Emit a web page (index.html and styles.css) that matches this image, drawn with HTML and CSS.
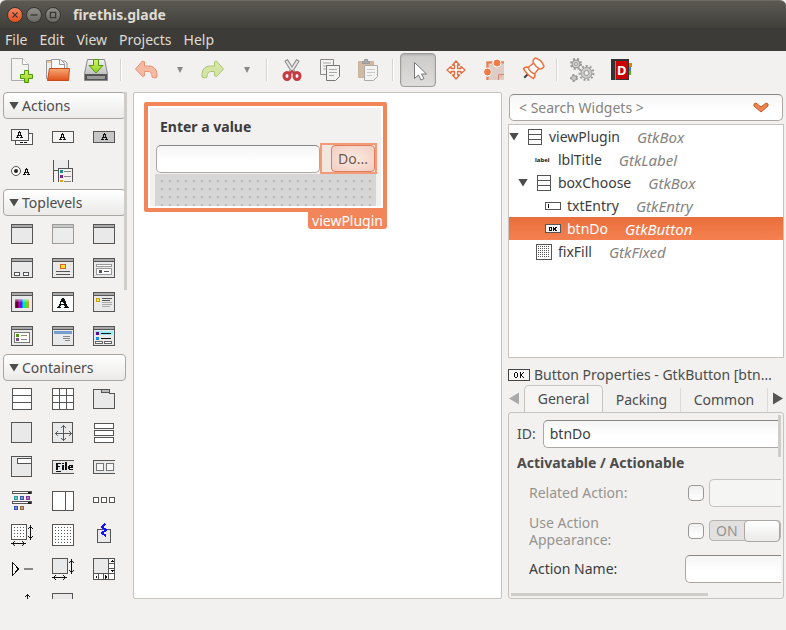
FILE: index.html
```html
<!DOCTYPE html>
<html lang="en">
<head>
<meta charset="utf-8">
<title>firethis.glade</title>
<link rel="stylesheet" href="styles.css">
</head>
<body>
<svg class="defs" aria-hidden="true">
  <defs>
    <linearGradient id="green" x1="0" y1="0" x2="0" y2="1"><stop offset="0" stop-color="#d6f06a"/><stop offset="1" stop-color="#8ccf20"/></linearGradient>
    <linearGradient id="folder" x1="0" y1="0" x2="0" y2="1"><stop offset="0" stop-color="#f6ab74"/><stop offset="1" stop-color="#e2501a"/></linearGradient>
    <linearGradient id="drive" x1="0" y1="0" x2="0" y2="1"><stop offset="0" stop-color="#f4f4f4"/><stop offset="1" stop-color="#a9a9a9"/></linearGradient>
    <linearGradient id="rainbow"><stop offset="0" stop-color="#f00"/><stop offset=".15" stop-color="#203"/><stop offset=".3" stop-color="#d0a"/><stop offset=".45" stop-color="#22f"/><stop offset=".6" stop-color="#0de"/><stop offset=".8" stop-color="#3e2"/><stop offset="1" stop-color="#f83"/></linearGradient>
    <linearGradient id="fade" x1="0" y1="0" x2="0" y2="1"><stop offset="0" stop-color="#fff" stop-opacity=".6"/><stop offset=".4" stop-color="#fff" stop-opacity="0"/></linearGradient>
    <pattern id="dots" width="3" height="3" patternUnits="userSpaceOnUse"><rect width="1" height="1" fill="#555"/></pattern>
    <pattern id="fine" width="2" height="2" patternUnits="userSpaceOnUse"><rect width="1" height="1" fill="#555"/></pattern>
    <g id="win"><rect x=".5" y="1.5" width="21" height="19" rx="1" fill="#e9e9e9" stroke="#555"/><path d="M1 2h20v2H1z" fill="#aaa"/><path d="M1 4.5h20" stroke="#555"/></g>
    <g id="letter"><path d="M4 0h1v1h1v3h1v2h1v1H5V6h1V5H3v1h1v1H1V6h1V4h1V1h1zM4 2v2h1V2z" fill="#111" fill-rule="evenodd"/></g>
    <g id="rows"><rect x=".5" y=".5" width="13" height="15" rx="1" fill="#fff" stroke="#555"/><path d="M1 5.500h12M1 10.500h12" stroke="#555"/></g>
    <g id="harrow" fill="none" stroke="#111"><path d="M0 3.500h15"/><path d="M3 1.500h1M2 2.500h1M2 4.500h1M3 5.500h1M11 1.500h1M12 2.500h1M12 4.500h1M11 5.500h1"/></g>
  </defs>
</svg>

<header class="titlebar">
  <button class="win-btn close" aria-label="Close"><svg viewBox="0 0 16 16"><path d="M5 5l6 6M11 5l-6 6"/></svg></button>
  <button class="win-btn" aria-label="Minimize"><svg viewBox="0 0 16 16"><path d="M4 8h8"/></svg></button>
  <button class="win-btn" aria-label="Maximize"><svg viewBox="0 0 16 16"><path d="M5 5h6v6H5z"/></svg></button>
  <h1>firethis.glade</h1>
</header>
<nav class="menubar">
  <button>File</button><button>Edit</button><button>View</button><button>Projects</button><button>Help</button>
</nav>

<div class="toolbar" role="toolbar">
  <button aria-label="New"><svg viewBox="0 0 26 26"><path d="M4.500 1.500h11l6 6v16h-17z" fill="#f4f4f3" stroke="#aaa"/><path d="M15.500 1.500v6h6" fill="#fff" stroke="#aaa"/><path d="M17.500 14.500h4v4h4v4h-4v4h-4v-4h-4v-4h4z" transform="translate(0 -1)" fill="url(#green)" stroke="#4e9a06"/></svg></button>
  <button aria-label="Open"><svg viewBox="0 0 26 26"><path d="M1.500 3.500h6v18h-6z" fill="#eee" stroke="#999"/><path d="M2 5h5" stroke="#f0a030"/><path d="M6.500 2.500h9l4 4v10h-13z" fill="#fafafa" stroke="#999"/><path d="M14.500 2.500v5h5M17 4h3l2 2v6" fill="none" stroke="#999"/><path d="M4.500 11.500h20l-1 12H2.500z" fill="url(#folder)" stroke="#c84a1a"/></svg></button>
  <button aria-label="Save"><svg viewBox="0 0 26 26"><path d="M4.500 2.500h17l3 14v7h-23v-7z" fill="url(#drive)" stroke="#888"/><path d="M2 17h22v6H2z" fill="#555"/><path d="M4 19h18v3H4z" fill="#999"/><path d="M10.500 2.500h5v6h4.500l-7 7.500-7-7.500h4.500z" fill="url(#green)" stroke="#4e9a06"/></svg></button>
  <span class="sep"></span>
  <button aria-label="Undo" disabled><svg class="dim" viewBox="0 0 26 26"><path d="M2.500 12l7-8q3 0 2 3v2h4c6 0 9 4 8.500 11q-2.500 2-5 0c0-4-2-5.500-4-5.500h-3.500v2q1 3-2 3z" stroke-linejoin="round" fill="#f6a582" stroke="#e4683a"/></svg></button>
  <button class="drop" aria-label="Undo history"><svg viewBox="0 0 8 6"><path d="M1 0h6L4 6z" fill="#888"/></svg></button>
  <button aria-label="Redo" disabled><svg class="dim" viewBox="0 0 26 26"><path d="M23.500 12l-7-8q-3 0-2 3v2h-4c-6 0-9 4-8.500 11q2.500 2 5 0c0-4 2-5.500 4-5.500h3.500v2q-1 3 2 3z" stroke-linejoin="round" fill="#c9e088" stroke="#86b440"/></svg></button>
  <button class="drop" aria-label="Redo history"><svg viewBox="0 0 8 6"><path d="M1 0h6L4 6z" fill="#888"/></svg></button>
  <span class="sep"></span>
  <button aria-label="Cut"><svg viewBox="0 0 26 26"><path d="M7 3l8 13M19 3l-8 13" stroke="#888" stroke-width="4"/><path d="M7.500 4l7 11M18.500 4l-7 11" stroke="#e6e6e6" stroke-width="2"/><g fill="none" stroke="#c63a40" stroke-width="3"><ellipse cx="8" cy="19" rx="3" ry="3.500"/><ellipse cx="18" cy="19" rx="3" ry="3.500"/></g><path d="M10 17l3-3 3 3" fill="none" stroke="#c63a40" stroke-width="2"/></svg></button>
  <button aria-label="Copy"><svg viewBox="0 0 26 26"><path d="M3.500 2.500h13v15h-13z" fill="#f3f3f2" stroke="#888"/><path d="M6 6h8M6 9h8M6 12h5" stroke="#aaa"/><path d="M9.500 8.500h13v11l-4 4h-9z" fill="#f3f3f2" stroke="#777"/><path d="M12 12.500h8M12 15.500h8M12 18.500h5" stroke="#aaa"/></svg></button>
  <button aria-label="Paste" disabled><svg viewBox="0 0 26 26"><path d="M3.500 4.500h15v16h-15z" fill="#d2baa0" stroke="#c9b59f"/><path d="M7.500 6.500h7v-2h-2v-2h-3v2h-2z" fill="#aaa" stroke="#999"/><path d="M9.500 8.500h13v11l-4 4h-9z" fill="#f3f3f2" stroke="#aaa"/><path d="M12 12.500h8M12 15.500h8M12 18.500h5" stroke="#ccc"/></svg></button>
  <span class="sep"></span>
  <button class="active" aria-label="Select" aria-pressed="true"><svg viewBox="0 0 26 26"><path d="M9.500 5.500v16l4-3.500 2.500 5 3-1.500-2.500-4.500h5z" fill="#fff" stroke="#777"/></svg></button>
  <button aria-label="Drag resize"><svg viewBox="0 0 26 26"><path d="M13 4l3.500 4H14.500v3.500H18v-2l4 3.500-4 3.500v-2h-3.500V18h2L13 22l-3.500-4h2v-3.500H8v2L4 13l4-3.500v2h3.500V8h-2z" fill="#fff" stroke="#e26a3c" stroke-width="1.300" stroke-linejoin="round"/></svg></button>
  <button aria-label="Margin edit"><svg viewBox="0 0 26 26"><path d="M5 4h18v19H5z" fill="#dfccc6"/><path d="M6.500 23v-3M6.500 11V5.500H11M20 5.500h3" fill="none" stroke="#ee7a4a" stroke-width="2"/><path d="M17.500 23v-5.500H23" fill="#e8b9a4" stroke="#c98d78"/><g fill="#f27a45" stroke="#fff"><circle cx="16" cy="6" r="4"/><circle cx="6.500" cy="15" r="4"/></g></svg></button>
  <button aria-label="Align edit"><svg viewBox="0 0 26 26"><g transform="rotate(45 13 13)" stroke-linejoin="round"><path d="M13 18v6" stroke="#444" stroke-width="2"/><g fill="#fff" stroke="#ee7140" stroke-width="1.500"><path d="M6 18c0-4 3-5 7-5s7 1 7 5q-7 2-14 0z"/><path d="M9.500 5h7l1 9q-4.500 2-9 0z"/><path d="M7 2q6-3 12 0 1 4-2 5-4 1-8 0-3-1-2-5z"/></g></g></svg></button>
  <span class="sep"></span>
  <button aria-label="Preview"><svg viewBox="0 0 26 26"><g fill="#ccc" stroke="#999"><circle cx="7" cy="7" r="4"/><circle cx="17.500" cy="16" r="5.500"/><circle cx="5" cy="21" r="2.500"/></g><g fill="none" stroke="#999" stroke-dasharray="2 2" stroke-width="2"><circle cx="7" cy="7" r="5"/><circle cx="17.500" cy="16" r="7"/><circle cx="5" cy="21" r="3"/></g><g fill="#eee" stroke="#999"><circle cx="7" cy="7" r="1.500"/><circle cx="17.500" cy="16" r="2.500"/></g></svg></button>
  <button aria-label="API documentation"><svg viewBox="0 0 26 26"><path d="M21 6h4v4h-4z" fill="#d98400"/><path d="M21 10h3v4h-3z" fill="#3a7fe0"/><path d="M21 14h3v4h-3z" fill="#58b030"/><path d="M4 2h18v21H4z" fill="#333"/><path d="M8 4h13v18H8z" fill="#cc0000"/><path d="M8.500 4v19" stroke="#888"/><text class="book-letter" x="10" y="18">D</text></svg></button>
</div>

<main>
  <aside class="palette">
    <section>
      <button class="group-head"><span class="tri"></span>Actions</button>
      <div class="grid">
        <button aria-label="Action group"><svg viewBox="0 0 22 22"><rect x="4.500" y="7.500" width="17" height="11" rx="1" fill="#f8f8f8" stroke="#555"/><path d="M9 16.500h8" stroke="#111" stroke-dasharray="3 1"/><rect x=".5" y="3.500" width="17" height="11" rx="1" fill="#f4f4f4" stroke="#555"/><use href="#letter" x="4" y="5"/></svg></button>
        <button aria-label="Action"><svg viewBox="0 0 22 22"><rect x=".5" y="5.500" width="21" height="11" rx="1" fill="#f4f4f4" stroke="#555"/><use href="#letter" x="6" y="7"/></svg></button>
        <button aria-label="Toggle action"><svg viewBox="0 0 22 22"><rect x=".5" y="5.500" width="21" height="11" rx="1" fill="#c6c6c6" stroke="#555"/><use href="#letter" x="7" y="7"/></svg></button>
        <button aria-label="Radio action"><svg viewBox="0 0 22 22"><g shape-rendering="auto"><circle cx="5" cy="11" r="4.500" fill="#fff" stroke="#555"/><circle cx="5" cy="11" r="2" fill="#222"/></g><use href="#letter" x="11" y="8"/></svg></button>
        <button aria-label="Recent action"><svg viewBox="0 0 22 22"><path d="M2 0h14v9H2z" fill="#ececec"/><path d="M1.500 0v22M16.500 0v9M2 10.500h5M6.500 22V8.500h14V22" fill="none" stroke="#555"/><path d="M12 11.500h7M12 16.500h7M12 21h7" stroke="#888"/><path d="M8 10h3v3H8z" fill="#198c8c"/><path d="M8 15h3v3H8z" fill="#75278c"/><path d="M8 20h3v2H8z" fill="#dfa019"/></svg></button>
      </div>
    </section>
    <section>
      <button class="group-head"><span class="tri"></span>Toplevels</button>
      <div class="grid">
        <button aria-label="Window"><svg viewBox="0 0 22 22"><use href="#win"/></svg></button>
        <button aria-label="Offscreen window"><svg viewBox="0 0 22 22" opacity=".55"><use href="#win"/></svg></button>
        <button aria-label="Application window"><svg viewBox="0 0 22 22"><use href="#win"/></svg></button>
        <button aria-label="Dialog"><svg viewBox="0 0 22 22"><use href="#win"/><path d="M3.500 15.500h5v3h-5zM12.500 15.500h5v3h-5z" fill="#fff" stroke="#555"/></svg></button>
        <button aria-label="About dialog"><svg viewBox="0 0 22 22"><use href="#win"/><rect x="8.500" y="7.500" width="5" height="4" rx="1" fill="#ffe13a" stroke="#d9621a"/><path d="M4 14.500h14M4 17.500h14" stroke="#555"/></svg></button>
        <button aria-label="File chooser dialog"><svg viewBox="0 0 22 22"><use href="#win"/><path d="M3.500 7.500h15v2h-15zM3.500 11.500h15v6h-15z" fill="#fff" stroke="#999"/><path d="M6 13h3v3H6z" fill="#555"/><path d="M11 14.500h5" stroke="#555"/></svg></button>
        <button aria-label="Color chooser dialog"><svg viewBox="0 0 22 22"><use href="#win"/><path d="M4 8h14v9H4z" fill="url(#rainbow)"/><path d="M4 8h14v9H4z" fill="url(#fade)"/></svg></button>
        <button aria-label="Font chooser dialog"><svg viewBox="0 0 22 22"><use href="#win"/><path d="M1 5h20v15H1z" fill="#fff"/><path d="M10 7h2l4 9h1v1h-5v-1h1l-1-2H9l-1 2h1v1H5v-1h1zM9 13h3l-2-3z" fill="#111" fill-rule="evenodd"/></svg></button>
        <button aria-label="Message dialog"><svg viewBox="0 0 22 22"><use href="#win"/><path d="M3.500 7.500h3v3h-3z" fill="#ffe96a" stroke="#c8a000"/><path d="M9 7.500h10M9 9.500h8" stroke="#555"/><path d="M9 11.500h10M9 13.500h10M9 15.500h8" stroke="#aaa"/></svg></button>
        <button aria-label="Recent chooser dialog"><svg viewBox="0 0 22 22"><use href="#win"/><rect x="3.500" y="7.500" width="15" height="10" rx="1" fill="#fff" stroke="#777"/><path d="M5 9h3v3H5z" fill="#4e9a06"/><path d="M5 13h3v3H5z" fill="#75507b"/><path d="M10 10.500h6M10 14.500h6" stroke="#888"/></svg></button>
        <button aria-label="Assistant"><svg viewBox="0 0 22 22"><use href="#win"/><path d="M2 6h18v3H2z" fill="#729fcf"/><path d="M11 11.500h7M11 13.500h7M13 15.500h5" stroke="#888"/></svg></button>
        <button aria-label="Application chooser dialog"><svg viewBox="0 0 22 22"><use href="#win"/><path d="M2 6h18v4H2z" fill="#9ceaf2"/><path d="M3 7h3v3H3z" fill="#5c0b9c"/><path d="M3 12h3v3H3z" fill="#1e8be0"/><path d="M8 8.500h10M8 13.500h10" stroke="#111"/><path d="M2.500 16.500h7v2h-7zM11.500 16.500h7v2h-7z" fill="#fff" stroke="#666"/></svg></button>
      </div>
    </section>
    <section>
      <button class="group-head"><span class="tri"></span>Containers</button>
      <div class="grid">
        <button aria-label="Box"><svg viewBox="0 0 22 22"><path d="M1.500 .5h19v21h-19zM2 7.500h18M2 14.500h18" fill="#fff" stroke="#555"/></svg></button>
        <button aria-label="Grid"><svg viewBox="0 0 22 22"><path d="M.5 .5h21v21H.5zM1 7.500h20M1 14.500h20M7.500 1v20M14.500 1v20" fill="#fff" stroke="#555"/></svg></button>
        <button aria-label="Notebook"><svg viewBox="0 0 22 22"><path d="M.5 1.500h16v4h5v15H.5z" fill="#e9e9e9" stroke="#555"/><path d="M8.500 1.500h8v3h-8z" fill="#bbb" stroke="#555"/></svg></button>
        <button aria-label="Frame"><svg viewBox="0 0 22 22"><rect x=".5" y=".5" width="20" height="20" rx="1" fill="#e9e9e9" stroke="#555"/></svg></button>
        <button aria-label="Aspect frame"><svg viewBox="0 0 22 22"><rect x=".5" y=".5" width="20" height="20" rx="1" fill="#e9e9e9" stroke="#555"/><path d="M11.500 3v16M3.500 11.500h16M9 6l2.500-2.500L14 6M9 16l2.500 2.500L14 16M6 9l-2.500 2.500L6 14M17 9l2.500 2.500L17 14" fill="none" stroke="#555"/></svg></button>
        <button aria-label="Menu bar"><svg viewBox="0 0 22 22"><path d="M1.500 1.500h19v5h-19zM1.500 8.500h19v5h-19zM1.500 15.500h19v5h-19z" fill="#fff" stroke="#555"/></svg></button>
        <button aria-label="Overlay"><svg viewBox="0 0 22 22"><rect x=".5" y=".5" width="20" height="20" rx="1" fill="#e9e9e9" stroke="#555"/><path d="M6.500 2.500h14v5h-14z" fill="#fff" stroke="#555"/></svg></button>
        <button aria-label="Menu"><svg viewBox="0 0 22 22"><path d="M22 4.500H.5v13H22" fill="#e9e9e9" stroke="#555"/><path d="M4 7h5v1H6v2h2v1H6v3H4zM10 7h2v1h-2zM10 9h2v5h-2zM13 6h2v8h-2zM17 9h4v3h-3v1h3v1h-4l-1-1v-3zM18 10v1h1v-1zM4 15h5v1H4z" fill="#111" fill-rule="evenodd"/></svg></button>
        <button aria-label="Toolbar"><svg viewBox="0 0 22 22"><path d="M22 4.500H.5v13H22" fill="#e9e9e9" stroke="#555"/><path d="M3.500 7.500h7v7h-7zM13.500 7.500h7v7h-7z" fill="#f6f6f6" stroke="#777"/></svg></button>
        <button aria-label="Tool palette"><svg viewBox="0 0 22 22"><path d="M1.500 1.500h19v2h-19zM1.500 11.500h19v2h-19z" fill="#fff" stroke="#555"/><path d="M17 2h3v2h-3zM17 12h3v2h-3z" fill="#222"/><path d="M3 6h4v4H3z" fill="#2a9d9d"/><path d="M9 6h4v4H9z" fill="#3457b0"/><path d="M15 6h4v4h-4z" fill="#8a2fa0"/><path d="M3 16h4v4H3z" fill="#3450b8"/><path d="M9 16h4v4H9z" fill="#8f6a35"/><path d="M4 7h2v2H4zM10 7h2v2h-2zM16 7h2v2h-2zM4 17h2v2H4zM10 17h2v2h-2z" fill="#fff" fill-opacity=".4"/></svg></button>
        <button aria-label="Paned"><svg viewBox="0 0 22 22"><path d="M.5 1.500h21v19H.5zM13.500 2v18" fill="#fff" stroke="#555"/></svg></button>
        <button aria-label="Button box"><svg viewBox="0 0 22 22"><path d="M.5 7.500h5v5h-5zM8.500 7.500h5v5h-5zM16.500 7.500h5v5h-5z" fill="#fff" stroke="#555"/></svg></button>
        <button aria-label="Layout"><svg viewBox="0 0 22 22"><path d="M.5 .5h15v15H.5z" fill="#fff" stroke="#555"/><path d="M3 3h10v10H3z" fill="url(#dots)"/><use href="#harrow" y="16"/><use href="#harrow" transform="translate(23 1) rotate(90)"/></svg></button>
        <button aria-label="Fixed"><svg viewBox="0 0 22 22"><path d="M.5 .5h21v21H.5z" fill="#fff" stroke="#555"/><path d="M3 3h16v16H3z" fill="url(#dots)"/></svg></button>
        <button aria-label="Event box"><svg viewBox="0 0 22 22"><path d="M4.500 5.500h13v13h-13z" fill="#e9e9e9" stroke="#555"/><path d="M12 0L9 3l4 3-4 3 4 3" fill="none" stroke="#11f" stroke-width="2"/></svg></button>
        <button aria-label="Expander"><svg viewBox="0 0 22 22"><path d="M1.500 4.500v13l6-6.500z" fill="#fff" stroke="#111"/><path d="M13 11h9" stroke="#888" stroke-width="2"/></svg></button>
        <button aria-label="Viewport"><svg viewBox="0 0 22 22"><path d="M.5 .5h15v15H.5z" fill="#e9e9e9" stroke="#555"/><use href="#harrow" y="16"/><use href="#harrow" transform="translate(23 1) rotate(90)"/></svg></button>
        <button aria-label="Scrolled window"><svg viewBox="0 0 22 22"><path d="M.5 .5h21v21H.5z" fill="#e9e9e9" stroke="#555"/><path d="M15.500 .5h6v21h-6zM.5 15.500h21v6H.5zM5.500 16v5M10.500 16v5M16 5.500h5M16 10.500h5" fill="#fff" stroke="#555"/><path d="M17 4h4l-2-2zM17 12h4l-2 2zM4 17v4l-2-2zM12 17v4l2-2z" fill="#111"/></svg></button>
        <button aria-label="Size group"><svg viewBox="0 0 22 22"><path d="M16.500 22V2M14 5l2.500-2.500L19 5" fill="none" stroke="#111"/></svg></button>
        <button aria-label="Stack"><svg viewBox="0 0 22 22"><path d="M.5 22V1.500h20V22" fill="#e9e9e9" stroke="#555"/></svg></button>
      </div>
    </section>
    <span class="thumb"></span>
  </aside>

  <section class="canvas">
    <div class="view">
      <div class="view-body">
        <h2><label for="entry">Enter a value</label></h2>
        <div class="choose">
          <input id="entry" class="entry" type="text">
          <div class="picked"><button>Do...</button></div>
        </div>
        <div class="fill"></div>
      </div>
      <span class="tag">viewPlugin</span>
    </div>
  </section>

  <aside class="inspector">
    <div class="search">
      <input type="text" placeholder="&lt; Search Widgets &gt;" aria-label="Search widgets">
      <svg viewBox="0 0 16 11"><path d="M1 2l2-1 5 4 5-4 2 1v2l-7 6-7-6z" fill="#ee8450" stroke="#c65a28" stroke-linejoin="round"/></svg>
    </div>
    <div class="tree" role="tree">
      <div class="node" role="treeitem"><span class="tri"></span><svg class="rows" viewBox="0 0 14 16"><use href="#rows"/></svg><span>viewPlugin</span><i>GtkBox</i></div>
      <div class="node l1" role="treeitem"><svg viewBox="0 0 16 16"><text class="tiny" x="-1" y="10">label</text></svg><span>lblTitle</span><i>GtkLabel</i></div>
      <div class="node l1 open" role="treeitem"><span class="tri"></span><svg class="rows" viewBox="0 0 14 16"><use href="#rows"/></svg><span>boxChoose</span><i>GtkBox</i></div>
      <div class="node l2" role="treeitem"><svg viewBox="0 0 16 16"><rect x=".5" y="4.500" width="15" height="7" rx="1" fill="#fff" stroke="#555"/><path d="M3.500 6v4" stroke="#111"/></svg><span>txtEntry</span><i>GtkEntry</i></div>
      <div class="node l2 selected" role="treeitem" aria-selected="true"><svg viewBox="0 0 16 16"><rect x=".5" y="3.500" width="15" height="8" rx="1" fill="#f4f4f4" stroke="#555"/><path d="M4 6h3v4H4zM5 7v2h1V7zM8 6h1v1h1V6h2v1h-1v2h1v1h-2V9H9v1H8z" fill="#111" fill-rule="evenodd"/></svg><span>btnDo</span><i>GtkButton</i></div>
      <div class="node l1" role="treeitem"><svg viewBox="0 0 16 16"><path d="M.5 .5h15v15H.5z" fill="#fff" stroke="#555"/><path d="M2 2h12v12H2z" fill="url(#fine)"/></svg><span>fixFill</span><i>GtkFixed</i></div>
    </div>
    <h2 class="props-title"><svg viewBox="0 0 22 12"><path d="M.5 .5h21v11H.5z" fill="#f6f6f6" stroke="#444"/><path d="M7 3h2v1h1v4H9v1H7V8H6V4h1zM7 4v4h2V4zM12 3h1v2h1V4h1V3h1v1h-1v1h-1v2h1v1h1v1h-1V8h-1V7h-1v2h-1z" fill="#111" fill-rule="evenodd"/></svg><span>Button Properties - GtkButton [btn…</span></h2>
    <div class="tabs" role="tablist">
      <button class="arrow left" aria-label="Previous tabs"></button>
      <button class="tab current" role="tab" aria-selected="true">General</button>
      <button class="tab" role="tab">Packing</button>
      <button class="tab" role="tab">Common</button>
      <button class="arrow right" aria-label="Next tabs"></button>
    </div>
    <div class="props">
      <div class="props-view">
        <div class="id-row"><label for="wid">ID:</label><input id="wid" class="entry" type="text" value="btnDo"></div>
        <h3>Activatable / Actionable</h3>
        <div class="prop off"><label for="related">Related Action:</label><input type="checkbox" aria-label="Enable related action"><input id="related" class="entry" type="text" disabled></div>
        <div class="prop off two"><label for="appearance">Use Action Appearance:</label><input type="checkbox" aria-label="Enable use action appearance"><button id="appearance" class="switch" role="switch" aria-checked="true" disabled><span>ON</span></button></div>
        <div class="prop on"><label for="aname">Action Name:</label><input id="aname" class="entry wide" type="text"></div>
      </div>
      <span class="vthumb"></span><span class="hthumb"></span>
    </div>
  </aside>
</main>
</body>
</html>
```

FILE: styles.css
```css
* { box-sizing: border-box; }
body {
  margin: 0;
  height: 100vh;
  display: flex;
  flex-direction: column;
  overflow: hidden;
  background: #f2f1f0;
  color: #4c4c4c;
  font: 14px/20px "Noto Sans", "Open Sans", sans-serif;
}
button, input { font: inherit; color: inherit; margin: 0; }
button { border: 0; padding: 0; background: none; }
h1, h2, h3 { margin: 0; font-size: 14px; line-height: 20px; }
svg { display: block; flex: none; }
.defs { position: absolute; width: 0; height: 0; }

.titlebar {
  display: flex;
  align-items: center;
  gap: 3px;
  height: 28px;
  flex: none;
  padding-left: 7px;
  border-radius: 6px 6px 0 0;
  background: linear-gradient(#5b5952, #403f3a);
  border-top: 1px solid #6d6b64;
  color: #dfdbd2;
}
.titlebar h1 { margin-left: 9px; }
.win-btn { width: 16px; height: 16px; border-radius: 8px; background: linear-gradient(#918f88, #6b6963); border: 1px solid #35342f; }
.win-btn.close { background: linear-gradient(#f58560, #e2501f); }
.win-btn svg { width: 14px; height: 14px; fill: none; stroke: #3a3834; stroke-width: 1.500; }
.menubar {
  display: flex;
  gap: 12px;
  height: 23px;
  flex: none;
  padding-left: 5px;
  background: #3c3b37;
  color: #dfdbd2;
}

.toolbar { display: flex; align-items: center; gap: 2px; height: 41px; flex: none; padding: 0 2px 3px; }
.toolbar button { display: flex; align-items: center; justify-content: center; flex: none; width: 36px; height: 34px; border-radius: 4px; }
.toolbar svg { width: 26px; height: 26px; }
.toolbar .dim { opacity: .7; }
.toolbar .drop { width: 27px; }
.toolbar .drop svg { width: 8px; height: 6px; }
.toolbar .active { background: linear-gradient(#cbcac9, #dedddc); border: 1px solid #a09e9b; box-shadow: inset 0 1px 2px #aaa; }
.book-letter { font: bold 13px "Noto Sans", sans-serif; fill: #fff; }
.tiny { font: bold 6px "Noto Sans", sans-serif; fill: #111; }
.sep { width: 10px; height: 22px; flex: none; background: linear-gradient(90deg, #d6d4d2 50%, #fff 50%) center / 2px 100% no-repeat; }

main {
  flex: 1;
  min-height: 0;
  display: grid;
  grid-template: minmax(0, 1fr) / 124px 369fr 276fr;
  gap: 6px;
  padding: 0 2px 31px 3px;
}

.palette { position: relative; overflow: hidden; }
.palette section { padding-bottom: 1px; }
.group-head {
  display: flex;
  align-items: center;
  gap: 3px;
  width: 123px;
  height: 27px;
  padding-left: 5px;
  border: 1px solid #a9a6a2;
  border-radius: 4px;
  background: linear-gradient(#fff, #ebeae9);
}
.tri { width: 10px; height: 8px; flex: none; background: #4c4c4c; clip-path: polygon(0 0, 100% 0, 50% 100%); }
.grid { display: grid; grid-template-columns: repeat(3, 41px); grid-auto-rows: 34px; align-items: center; padding: 1px 0 0 8px; }
.grid button { width: 22px; height: 22px; }
.grid svg, .tree svg { shape-rendering: crispEdges; overflow: visible; }
.thumb { position: absolute; right: 0; top: 0; width: 3px; height: 39%; background: #cfcdca; }

.canvas { min-width: 0; background: #fff; border: 1px solid #c6c2be; padding: 9px 10px; border-radius: 2px; }
.view { position: relative; width: 243px; border: 4px solid #f28559; border-radius: 2px; padding: 2px; background: #fff; }
.view-body { background: #f2f1f0; padding: 9px 5px 0; }
.view-body h2 { padding-left: 5px; margin-bottom: 6px; color: #3c3c3c; }
.choose { display: flex; align-items: center; padding-left: 1px; margin-right: -1px; }
.entry { height: 28px; min-width: 0; border: 1px solid #aaa7a4; border-top-color: #888; border-radius: 5px; padding: 0 6px; background: linear-gradient(#f5f5f5, #fff 60%); color: #3c3c3c; }
.choose .entry { flex: 1; }
.picked { width: 57px; height: 31px; flex: none; border: 2px solid #f39a76; background: #f3e6df; display: flex; justify-content: flex-end; }
.picked button { width: 44px; height: 27px; border: 1px solid #df7d5c; border-radius: 4px; background: radial-gradient(#fbeae2, #f2cdbf); color: #73584e; }
.fill { height: 32px; background: conic-gradient(from 270deg at 2px 2px, #b9b9b9 25%, transparent 0) 6px 6px / 8px 8px #d6d6d6; }
.tag { position: absolute; right: -4px; top: 102px; height: 21px; padding: 0 4px; line-height: 25px; background: #f28559; color: #fff; border-radius: 0 0 3px 3px; }

.inspector { min-width: 0; display: flex; flex-direction: column; }
.search { position: relative; flex: none; margin: 2px 1px 3px; }
.search input { display: block; width: 100%; height: 27px; border: 1px solid #aaa7a4; border-top-color: #888; border-radius: 5px; padding: 0 30px 0 9px; background: linear-gradient(#f5f5f5, #fff 60%); }
.search input::placeholder { color: #858380; opacity: 1; }
.search svg { position: absolute; right: 14px; top: 8px; width: 16px; height: 11px; }
.tree { flex: 236 1 0; min-height: 0; overflow: hidden; border: 1px solid #c6c2be; background: #fff; color: #3c3c3c; }
.node { display: flex; align-items: center; height: 23px; }
.node .tri { margin-right: 9px; }
.node svg { width: 16px; height: 16px; margin-right: 6px; }
.node .rows { width: 14px; margin-right: 7px; }
.node i { margin-left: 17px; color: #858380; font-size: 15px; }
.l1 { padding-left: 27px; }
.l1.open { padding-left: 9px; }
.l2 { padding-left: 36px; }
.selected { background: linear-gradient(#e86f3c, #f68051); color: #fff; }
.selected i { color: #fff; }
.props-title { display: flex; align-items: center; gap: 4px; flex: none; margin-top: 7px; font-weight: 400; }
.props-title svg { width: 22px; height: 12px; shape-rendering: crispEdges; }
.props-title span { white-space: nowrap; }
.tabs { display: flex; flex: none; height: 28px; margin-bottom: -1px; position: relative; align-items: flex-end; }
.tab { flex: 1 1 auto; height: 25px; border-right: 1px solid #dcdad8; }
.tab.current { height: 28px; border: 1px solid #c6c2be; border-bottom: 0; border-radius: 5px 5px 0 0; background: #f6f5f4; }
.arrow { width: 16px; height: 28px; flex: none; }
.tabs .left { background: #aaa; clip-path: polygon(11px 8px, 11px 20px, 1px 14px); }
.tabs .right { background: #555; clip-path: polygon(5px 8px, 5px 20px, 15px 14px); }
.props { position: relative; flex: 185 1 0; min-height: 0; border: 1px solid #c6c2be; border-radius: 3px; padding: 2px; }
.props-view { height: 100%; overflow: hidden; padding: 5px 0 0 6px; }
.id-row { display: flex; align-items: center; gap: 7px; margin-bottom: 5px; }
.id-row .entry, .prop > .entry { border-right: 0; border-radius: 5px 0 0 5px; }
.id-row .entry { flex: 1; }
.prop { display: flex; align-items: center; gap: 5px; padding-left: 12px; height: 28px; margin-top: 6px; }
.prop label { flex: 1; }
.prop .entry { width: 72px; }
.prop .wide { width: 96px; }
.prop.on { color: #3c3c3c; }
.off { color: #96938f; }
.off .entry { background: #f5f5f4; border-color: #c4c2c0; }
.two { height: 36px; line-height: 17px; }
.two label { max-width: 110px; margin-right: auto; }
.prop [type=checkbox] { appearance: none; width: 16px; height: 16px; flex: none; border: 1px solid #9a9896; border-radius: 4px; background: linear-gradient(#f0f0f0, #fff); }
.switch { display: flex; justify-content: space-between; align-items: center; width: 72px; height: 21px; padding-left: 6px; border: 1px solid #b5b2af; border-radius: 4px; background: #e3e1df; color: #96938f; }
.switch::after { content: ""; width: 34px; height: 20px; border: 1px solid #a9a6a3; border-radius: 4px; background: linear-gradient(#fff, #ebeae9); }
.vthumb { position: absolute; right: 2px; top: 2px; width: 3px; height: 42px; background: #cfcdca; }
.hthumb { position: absolute; left: 2px; bottom: 2px; width: 72%; height: 3px; background: #cfcdca; }
```
